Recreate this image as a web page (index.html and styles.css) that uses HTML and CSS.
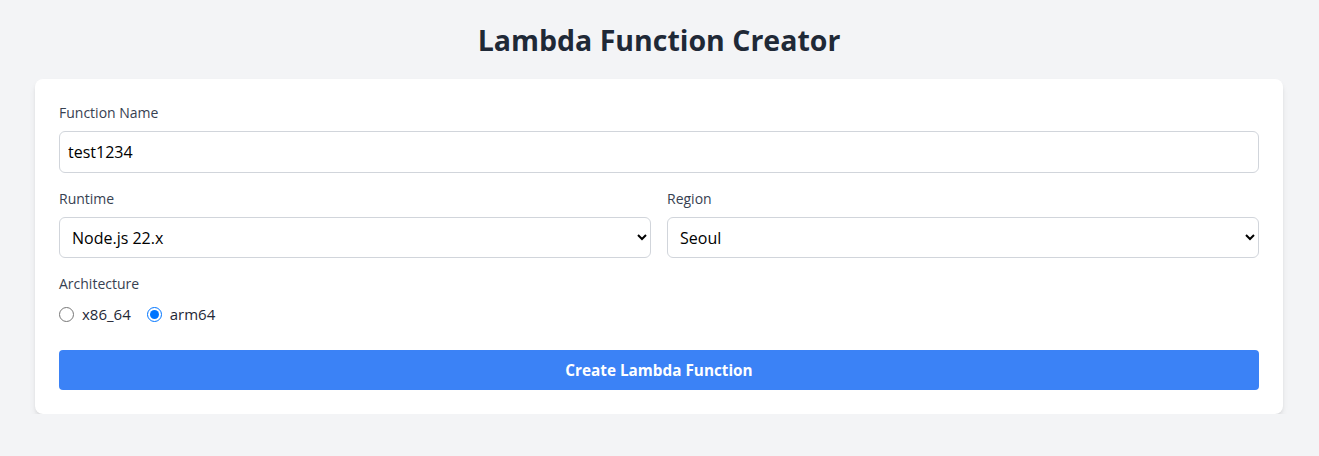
FILE: index.html
```html
<!DOCTYPE html>
<html lang="en">
<head>
<meta charset="utf-8">
<title>Lambda Function Creator</title>
<link rel="stylesheet" href="styles.css">
</head>
<body>
<div class="page">
  <h1 class="title">Lambda Function Creator</h1>
  <form class="card">
    <div class="field">
      <label class="label" for="fname">Function Name</label>
      <input class="control" id="fname" type="text" value="test1234">
    </div>
    <div class="grid field">
      <div>
        <label class="label" for="runtime">Runtime</label>
        <select class="control select" id="runtime">
          <option>Node.js 22.x</option>
          <option>Node.js 20.x</option>
          <option>Python 3.12</option>
        </select>
      </div>
      <div>
        <label class="label" for="region">Region</label>
        <select class="control select" id="region">
          <option>Seoul</option>
          <option>Tokyo</option>
          <option>Virginia</option>
        </select>
      </div>
    </div>
    <div class="field arch">
      <span class="label">Architecture</span>
      <div class="radios">
        <label class="radio"><input type="radio" name="arch" value="x86_64"><span>x86_64</span></label>
        <label class="radio"><input type="radio" name="arch" value="arm64" checked><span>arm64</span></label>
      </div>
    </div>
    <button type="button" class="btn">Create Lambda Function</button>
  </form>
</div>
</body>
</html>
```
FILE: styles.css
```css
* { box-sizing: border-box; }
html, body { margin: 0; padding: 0; }
body {
  background: #f3f4f6;
  font-family: "Open Sans", "Noto Sans CJK KR", sans-serif;
  color: #1f2937;
}
.page {
  padding: 22px 36px 0 35px;
}
.title {
  margin: 0 0 21px;
  text-align: center;
  font-size: 28.5px;
  line-height: 36px;
  font-weight: 700;
  color: #1f2937;
}
.card {
  background: #fff;
  border-radius: 8px;
  box-shadow: 0 4px 6px -1px rgba(0,0,0,0.1), 0 2px 4px -2px rgba(0,0,0,0.1);
  padding: 24px;
}
.field { margin-bottom: 16px; }
.field.arch { margin-bottom: 24px; }
.label {
  display: block;
  font-size: 14px;
  line-height: 20px;
  color: #374151;
  margin-bottom: 8px;
}
.control {
  display: block;
  width: 100%;
  font-family: inherit;
  font-size: 16px;
  line-height: 24px;
  color: #000;
  padding: 8px;
  border: 1px solid #d1d5db;
  border-radius: 6px;
  background: #fff;
  margin: 0;
}
.select { height: 41px; padding: 8px 8px; }
.grid {
  display: grid;
  grid-template-columns: 1fr 1fr;
  gap: 16px;
}
.radios {
  display: flex;
  align-items: center;
  gap: 16px;
  height: 24px;
}
.radio {
  display: inline-flex;
  align-items: center;
  gap: 8px;
  font-size: 15px;
  color: #1f2937;
}
.radio input {
  margin: 0;
  width: 15px;
  height: 15px;
  accent-color: #0075ff;
}
.btn {
  display: block;
  width: 100%;
  height: 40px;
  border: none;
  border-radius: 4px;
  background: #3b82f6;
  color: #fff;
  font-family: inherit;
  font-size: 15.3px;
  font-weight: 700;
  cursor: pointer;
}
```
